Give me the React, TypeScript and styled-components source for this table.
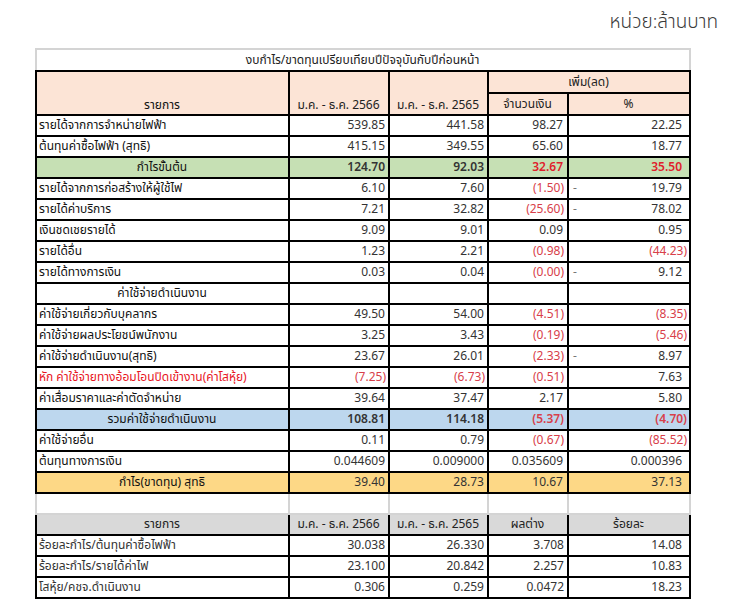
import React from "react";
import styled, { createGlobalStyle } from "styled-components";

const Global = createGlobalStyle`
  html, body { margin: 0; padding: 0; background: #ffffff; }
  body { font-family: Tahoma, "Noto Sans Thai", "Noto Sans", "DejaVu Sans", sans-serif; color: #222; }
`;

const FONT = `Tahoma, "Noto Sans Thai", "Loma", "Garuda", "Noto Sans", "DejaVu Sans", sans-serif`;

const Page = styled.div`
  width: 730px;
  height: 613px;
  box-sizing: border-box;
  padding: 10px 12px 0 35px;
  display: flex;
  flex-direction: column;
`;

const UnitBar = styled.div`
  display: flex;
  justify-content: flex-end;
  height: 38px;
  font-family: ${FONT};
  font-size: 19px;
  font-weight: 300;
  color: #3a3a3a;
  line-height: 26px;
`;

const Sheet = styled.table`
  width: 654px;
  border-collapse: collapse;
  table-layout: fixed;
  font-family: ${FONT};
  font-size: 12px;
  color: #222;
`;

type Tone = "plain" | "pink" | "green" | "blue" | "yellow" | "gray";
const toneBg: Record<Tone, string> = {
  plain: "#ffffff",
  pink: "#fce4d6",
  green: "#c6e0b4",
  blue: "#bdd7ee",
  yellow: "#fdd886",
  gray: "#d9d9d9",
};

const Row = styled.tr<{ $tone?: Tone }>`
  background: ${(p) => toneBg[p.$tone || "plain"]};
`;

const Cell = styled.td<{
  $align?: "left" | "center" | "right";
  $valign?: "middle" | "bottom";
  $bold?: boolean;
  $pr?: number;
  $light?: boolean;
  $tall?: number;
}>`
  box-sizing: border-box;
  height: ${(p) => p.$tall || 21}px;
  padding: 0 ${(p) => (p.$pr != null ? p.$pr : 3)}px 0 2px;
  border: 2px solid ${(p) => (p.$light ? "#d4d4d4" : "#000")};
  text-align: ${(p) => p.$align || "left"};
  vertical-align: ${(p) => p.$valign || "middle"};
  white-space: nowrap;
  overflow: hidden;
  color: #222;
  font-weight: ${(p) => (p.$bold ? 600 : 400)};
  line-height: 17px;
  position: relative;
`;

const TitleCell = styled(Cell)`
  border-color: #d4d4d4;
  border-bottom-color: #000;
`;

const Dash = styled.span`
  position: absolute;
  left: 4px;
  top: 1px;
  color: #777;
`;

const Num = styled.span<{ $red?: boolean; $strong?: boolean }>`
  color: ${(p) => (p.$strong ? "#e0202c" : p.$red ? "#d8404a" : "#333")};
`;

const LabelText = styled.span<{ $red?: boolean; $soft?: boolean }>`
  color: ${(p) => (p.$red ? "#e8141e" : p.$soft ? "#333" : "#111")};
  font-weight: 400;
`;

type DataRow = {
  label: string;
  v: string[];
  tone?: Tone;
  center?: boolean;
  bold?: boolean;
  dash?: boolean;
  redLabel?: boolean;
  redCols?: number[];
};

const rows: DataRow[] = [
  { label: "รายได้จากการจำหน่ายไฟฟ้า", v: ["539.85", "441.58", "98.27", "22.25"] },
  { label: "ต้นทุนค่าซื้อไฟฟ้า (สุทธิ)", v: ["415.15", "349.55", "65.60", "18.77"] },
  { label: "กำไรขั้นต้น", v: ["124.70", "92.03", "32.67", "35.50"], tone: "green", center: true, bold: true, redCols: [2, 3] },
  { label: "รายได้จากการก่อสร้างให้ผู้ใช้ไฟ", v: ["6.10", "7.60", "(1.50)", "19.79"], dash: true },
  { label: "รายได้ค่าบริการ", v: ["7.21", "32.82", "(25.60)", "78.02"], dash: true },
  { label: "เงินชดเชยรายได้", v: ["9.09", "9.01", "0.09", "0.95"] },
  { label: "รายได้อื่น", v: ["1.23", "2.21", "(0.98)", "(44.23)"] },
  { label: "รายได้ทางการเงิน", v: ["0.03", "0.04", "(0.00)", "9.12"], dash: true },
  { label: "ค่าใช้จ่ายดำเนินงาน", v: ["", "", "", ""], center: true },
  { label: "ค่าใช้จ่ายเกี่ยวกับบุคลากร", v: ["49.50", "54.00", "(4.51)", "(8.35)"] },
  { label: "ค่าใช้จ่ายผลประโยชน์พนักงาน", v: ["3.25", "3.43", "(0.19)", "(5.46)"] },
  { label: "ค่าใช้จ่ายดำเนินงาน(สุทธิ)", v: ["23.67", "26.01", "(2.33)", "8.97"], dash: true },
  { label: "หัก  ค่าใช้จ่ายทางอ้อมโอนปิดเข้างาน(ค่าโสหุ้ย)", v: ["(7.25)", "(6.73)", "(0.51)", "7.63"], redLabel: true },
  { label: "ค่าเสื่อมราคาและค่าตัดจำหน่าย", v: ["39.64", "37.47", "2.17", "5.80"] },
  { label: "รวมค่าใช้จ่ายดำเนินงาน", v: ["108.81", "114.18", "(5.37)", "(4.70)"], tone: "blue", center: true, bold: true },
  { label: "ค่าใช้จ่ายอื่น", v: ["0.11", "0.79", "(0.67)", "(85.52)"] },
  { label: "ต้นทุนทางการเงิน", v: ["0.044609", "0.009000", "0.035609", "0.000396"] },
  { label: "กำไร(ขาดทุน) สุทธิ", v: ["39.40", "28.73", "10.67", "37.13"], tone: "yellow", center: true },
];

const ratios = [
  { label: "ร้อยละกำไร/ต้นทุนค่าซื้อไฟฟ้า", v: ["30.038", "26.330", "3.708", "14.08"] },
  { label: "ร้อยละกำไร/รายได้ค่าไฟ", v: ["23.100", "20.842", "2.257", "10.83"] },
  { label: "โสหุ้ย/คชจ.ดำเนินงาน", v: ["0.306", "0.259", "0.0472", "18.23"] },
];

function padFor(col: number, val: string) {
  const neg = val.startsWith("(");
  if (col === 3) return neg ? 2 : 7;
  if (col === 2) return neg ? 3 : 4;
  return neg ? 2 : 3;
}

export default function App() {
  return (
    <Page>
      <Global />
      <UnitBar>หน่วย:ล้านบาท</UnitBar>
      <Sheet>
        <colgroup>
          <col style={{ width: 253 }} />
          <col style={{ width: 100 }} />
          <col style={{ width: 99 }} />
          <col style={{ width: 80 }} />
          <col style={{ width: 122 }} />
        </colgroup>
        <tbody>
          <Row>
            <TitleCell colSpan={5} $align="center" $tall={22}>
              งบกำไร/ขาดทุนเปรียบเทียบปีปัจจุบันกับปีก่อนหน้า
            </TitleCell>
          </Row>
          <Row $tone="pink">
            <Cell rowSpan={2} $align="center" $valign="bottom">
              <LabelText>รายการ</LabelText>
            </Cell>
            <Cell rowSpan={2} $align="center" $valign="bottom">
              ม.ค. - ธ.ค. 2566
            </Cell>
            <Cell rowSpan={2} $align="center" $valign="bottom">
              ม.ค. - ธ.ค. 2565
            </Cell>
            <Cell colSpan={2} $align="center" $tall={22}>
              เพิ่ม(ลด)
            </Cell>
          </Row>
          <Row $tone="pink">
            <Cell $align="center" $tall={22}>จำนวนเงิน</Cell>
            <Cell $align="center" $tall={22}>%</Cell>
          </Row>
          {rows.map((r) => (
            <Row key={r.label} $tone={r.tone}>
              <Cell $align={r.center ? "center" : "left"}>
                <LabelText $red={r.redLabel}>{r.label}</LabelText>
              </Cell>
              {r.v.map((val, i) => {
                const neg = val.startsWith("(");
                const forcedRed = r.redCols?.includes(i);
                return (
                  <Cell key={i} $align="right" $pr={padFor(i, val)} $bold={r.bold}>
                    {i === 3 && r.dash && <Dash>-</Dash>}
                    <Num $red={neg} $strong={forcedRed}>{val}</Num>
                  </Cell>
                );
              })}
            </Row>
          ))}
          <Row>
            <Cell $light />
            <Cell $light />
            <Cell $light />
            <Cell $light />
            <Cell $light />
          </Row>
          <Row $tone="gray">
            <Cell $align="center">รายการ</Cell>
            <Cell $align="center">ม.ค. - ธ.ค. 2566</Cell>
            <Cell $align="center">ม.ค. - ธ.ค. 2565</Cell>
            <Cell $align="center">ผลต่าง</Cell>
            <Cell $align="center">ร้อยละ</Cell>
          </Row>
          {ratios.map((r) => (
            <Row key={r.label}>
              <Cell>
                <LabelText $soft>{r.label}</LabelText>
              </Cell>
              {r.v.map((val, i) => (
                <Cell key={i} $align="right" $pr={i === 3 ? 7 : 3}>
                  <Num>{val}</Num>
                </Cell>
              ))}
            </Row>
          ))}
        </tbody>
      </Sheet>
    </Page>
  );
}
